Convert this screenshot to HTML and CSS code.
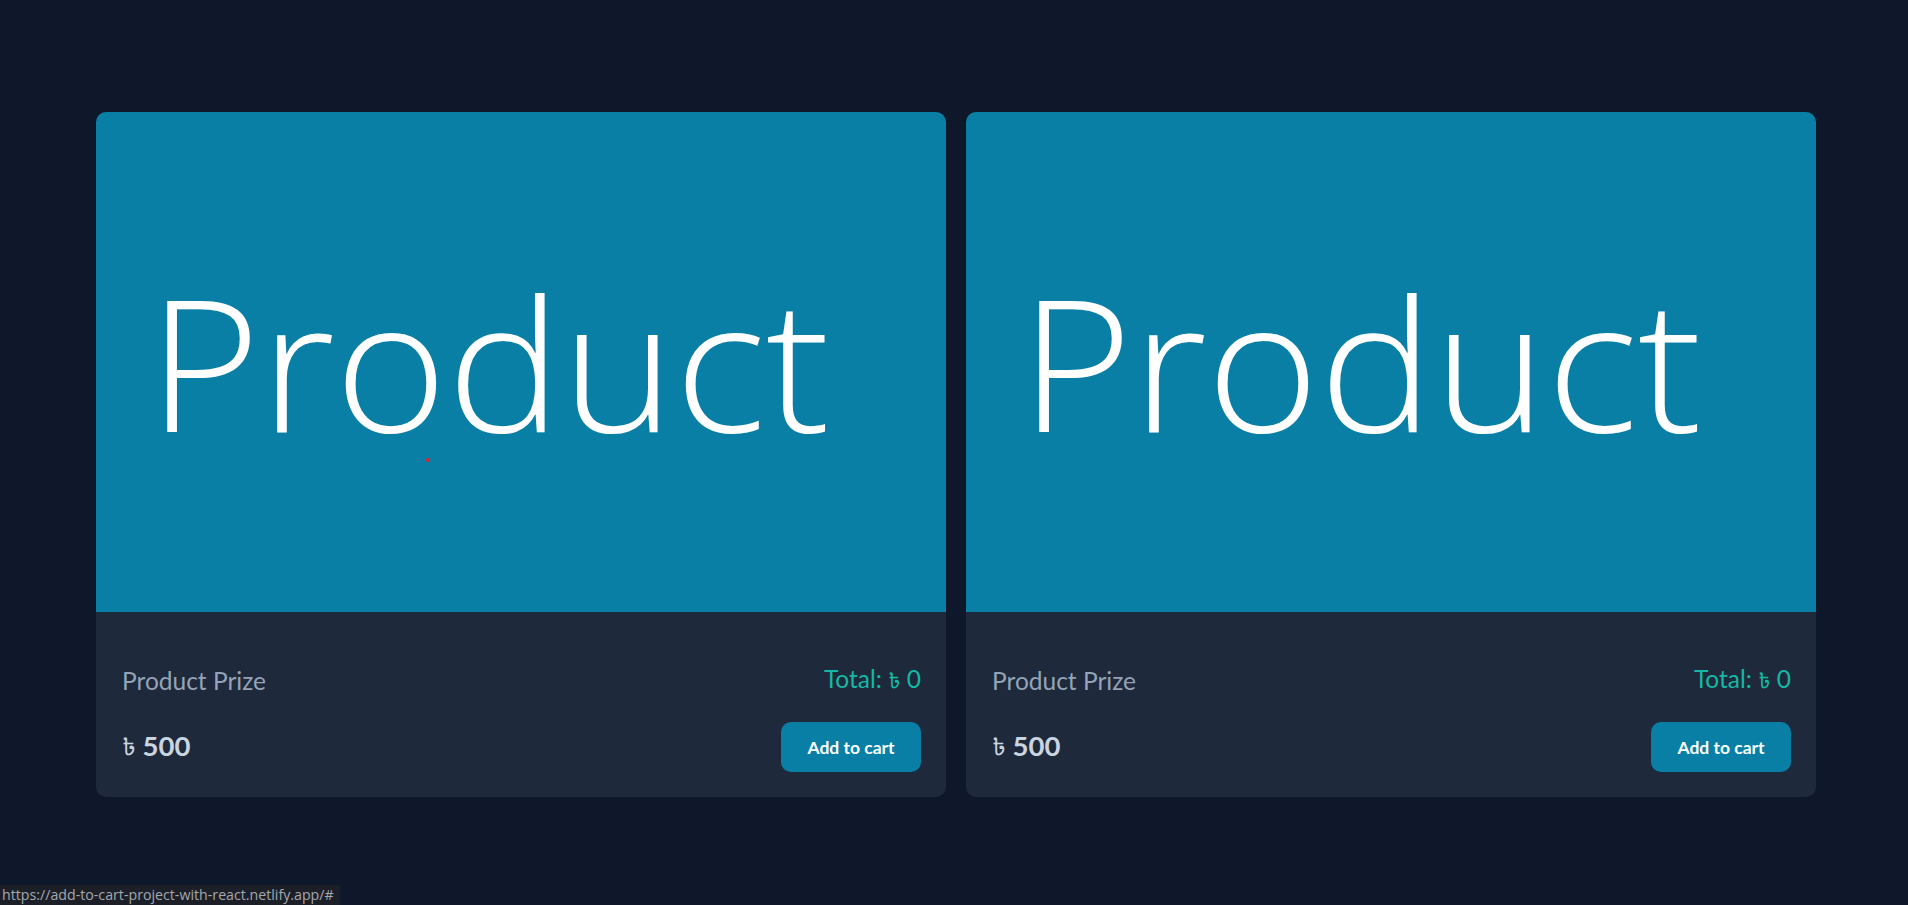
FILE: index.html
```html
<!DOCTYPE html>
<html lang="en">
<head>
<meta charset="utf-8">
<title>Add to cart</title>
<link rel="stylesheet" href="styles.css">
</head>
<body>
<main class="products">
  <article class="card">
    <div class="card-image">
      <svg class="placeholder" viewBox="0 0 850 500" width="850" height="500" aria-label="Product">
        <text x="52" y="320" textLength="682" lengthAdjust="spacingAndGlyphs" class="ph-text">Product</text>
      </svg>
      <span class="dot"></span>
    </div>
    <div class="card-body">
      <div class="row">
        <span class="label">Product Prize</span>
        <span class="total">Total: <span class="cur">৳</span> 0</span>
      </div>
      <div class="row row-action">
        <span class="price"><span class="cur">৳</span> 500</span>
        <button class="btn">Add to cart</button>
      </div>
    </div>
  </article>
  <article class="card">
    <div class="card-image">
      <svg class="placeholder" viewBox="0 0 850 500" width="850" height="500" aria-label="Product">
        <text x="54" y="320" textLength="682" lengthAdjust="spacingAndGlyphs" class="ph-text">Product</text>
      </svg>
    </div>
    <div class="card-body">
      <div class="row">
        <span class="label">Product Prize</span>
        <span class="total">Total: <span class="cur">৳</span> 0</span>
      </div>
      <div class="row row-action">
        <span class="price"><span class="cur">৳</span> 500</span>
        <button class="btn">Add to cart</button>
      </div>
    </div>
  </article>
</main>
<div class="status">https://add-to-cart-project-with-react.netlify.app/#</div>
</body>
</html>
```

FILE: styles.css
```css
html, body {
  margin: 0;
  padding: 0;
}
body {
  background: #0f172a;
  width: 1908px;
  height: 905px;
  overflow: hidden;
  font-family: Lato, "Open Sans", "DejaVu Sans", sans-serif;
  position: relative;
}
.products {
  display: grid;
  grid-template-columns: 850px 850px;
  gap: 20px;
  padding: 112px 0 0 96px;
}
.card {
  background: #1e293b;
  border-radius: 10px;
  overflow: hidden;
}
.card-image {
  height: 500px;
  background: #097fa5;
  position: relative;
}
.placeholder {
  display: block;
}
.ph-text {
  fill: #ffffff;
  font-family: "Open Sans", "Noto Sans", sans-serif;
  font-weight: 300;
  font-size: 182px;
}
.dot {
  position: absolute;
  left: 330px;
  top: 346px;
  width: 4px;
  height: 4px;
  border-radius: 50%;
  background: #e0252b;
}
.card-body {
  height: 185px;
  box-sizing: border-box;
  padding: 52px 25px 25px 26px;
  display: flex;
  flex-direction: column;
  gap: 26px;
}
.row {
  display: flex;
  justify-content: space-between;
  align-items: center;
  height: 32px;
}
.row-action {
  height: 50px;
}
.label {
  color: #94a3b8;
  font-size: 24.5px;
}
.total {
  color: #14b8a6;
  font-size: 24.5px;
}
.cur {
  font-family: "Noto Sans Bengali", "Noto Sans", "DejaVu Sans", sans-serif;
  font-weight: 400;
  font-size: 0.85em;
}
.price {
  color: #cbd5e1;
  font-size: 27.5px;
  font-weight: 700;
}
.btn {
  width: 140px;
  height: 50px;
  border: none;
  border-radius: 10px;
  background: #097fa5;
  color: #ffffff;
  font-family: Lato, "Open Sans", sans-serif;
  font-weight: 700;
  font-size: 17.5px;
  padding: 0;
  cursor: pointer;
}
.status {
  position: absolute;
  left: 0;
  bottom: 0;
  height: 20px;
  line-height: 20px;
  padding: 0 6px 0 2px;
  background: #1c1f27;
  color: #a3a8b0;
  font-family: "Open Sans", "Noto Sans", sans-serif;
  font-size: 14.2px;
  border-top-right-radius: 2px;
}
```
